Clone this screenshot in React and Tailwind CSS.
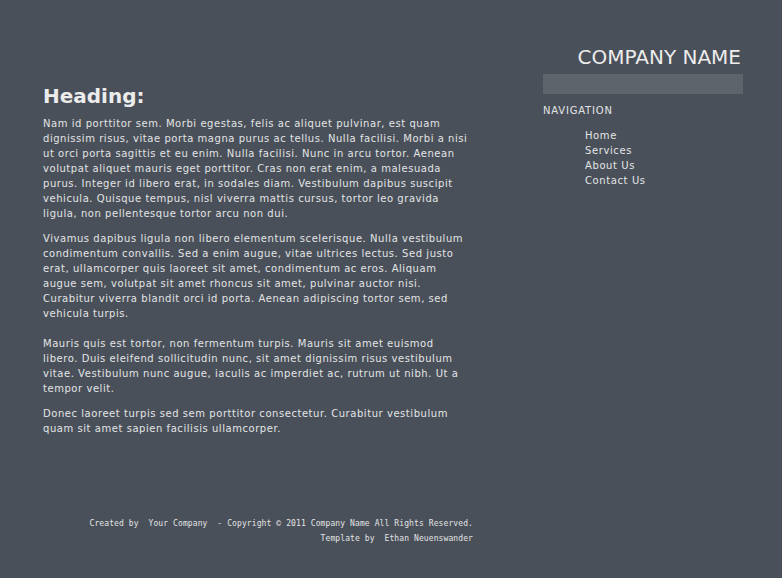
const NAV_LINKS = ['Home', 'Services', 'About Us', 'Contact Us']

export default function App() {
  return (
    <div className="min-h-screen bg-[#4a5059] text-[#e2e4e6] font-['DejaVu_Sans',Verdana,sans-serif]">
      <div className="flex">
        {/* main column */}
        <div className="ml-[43px] w-[430px] pt-[84px]">
          <h1 className="text-[20px] font-bold leading-[24px] text-[#ececec]">Heading:</h1>
          <div className="mt-[8px] w-[426px] text-[10px] leading-[15px] tracking-[0.55px]">
            <p>
              Nam id porttitor sem. Morbi egestas, felis ac aliquet pulvinar, est quam dignissim risus, vitae porta magna purus ac tellus. Nulla facilisi. Morbi a nisi ut orci porta sagittis et eu enim. Nulla facilisi. Nunc in arcu tortor. Aenean volutpat aliquet mauris eget porttitor. Cras non erat enim, a malesuada purus. Integer id libero erat, in sodales diam. Vestibulum dapibus suscipit vehicula. Quisque tempus, nisl viverra mattis cursus, tortor leo gravida ligula, non pellentesque tortor arcu non dui.
            </p>
            <p className="mt-[10px]">
              Vivamus dapibus ligula non libero elementum scelerisque. Nulla vestibulum condimentum convallis. Sed a enim augue, vitae ultrices lectus. Sed justo erat, ullamcorper quis laoreet sit amet, condimentum ac eros. Aliquam augue sem, volutpat sit amet rhoncus sit amet, pulvinar auctor nisi. Curabitur viverra blandit orci id porta. Aenean adipiscing tortor sem, sed vehicula turpis.
              <br />
              <br />
              Mauris quis est tortor, non fermentum turpis. Mauris sit amet euismod libero. Duis eleifend sollicitudin nunc, sit amet dignissim risus vestibulum vitae. Vestibulum nunc augue, iaculis ac imperdiet ac, rutrum ut nibh. Ut a tempor velit.
            </p>
            <p className="mt-[10px]">
              Donec laoreet turpis sed sem porttitor consectetur. Curabitur vestibulum quam sit amet sapien facilisis ullamcorper.
            </p>
          </div>

          {/* footer */}
          <div className="mt-[80px] text-right font-['DejaVu_Sans_Mono',monospace] text-[8px] leading-[15px] tracking-[0.1px] whitespace-pre">
            <p>Created by  Your Company  - Copyright © 2011 Company Name All Rights Reserved.</p>
            <p>Template by  Ethan Neuenswander</p>
          </div>
        </div>

        {/* sidebar */}
        <div className="ml-[70px] w-[200px] pt-[44px]">
          <div className="pr-[2px] text-right text-[20px] leading-[26px] text-[#ececec]">COMPANY NAME</div>
          <div className="mt-[4px] h-[20px] bg-[#5e646c]" />
          <div className="mt-[11px] text-[10px] leading-[12px] tracking-[0.8px]">NAVIGATION</div>
          <ul className="mt-[11px] pl-[42px] text-[10px] leading-[15px] tracking-[0.6px]">
            {NAV_LINKS.map(l => (
              <li key={l}>{l}</li>
            ))}
          </ul>
        </div>
      </div>
    </div>
  )
}
